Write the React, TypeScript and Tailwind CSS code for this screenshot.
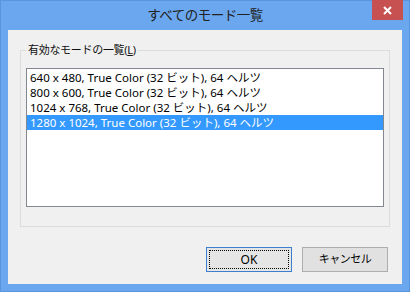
import React from 'react';

const modes = [
  '640 x 480, True Color (32 ビット), 64 ヘルツ',
  '800 x 600, True Color (32 ビット), 64 ヘルツ',
  '1024 x 768, True Color (32 ビット), 64 ヘルツ',
  '1280 x 1024, True Color (32 ビット), 64 ヘルツ',
];

const uiFont = { fontFamily: '"Noto Sans", "Noto Sans CJK JP", sans-serif' };

export default function App() {
  return (
    <div className="w-[410px] h-[292px] bg-[#6aa7ef] border border-[#5a95dc] flex flex-col text-[#000]" style={uiFont}>
      {/* title bar */}
      <div className="relative h-[29px] flex items-center justify-center shrink-0">
        <span className="text-[13.5px] text-[#222] tracking-[-0.5px]">すべてのモード一覧</span>
        <button className="absolute right-[6px] -top-px w-[31px] h-[20px] bg-[#c75050] flex items-center justify-center">
          <svg width="9" height="9" viewBox="0 0 9 9">
            <path d="M1 1L8 8M8 1L1 8" stroke="#fff" strokeWidth="2" />
          </svg>
        </button>
      </div>

      {/* client area */}
      <div className="flex-1 mx-[7px] mb-[7px] bg-[#f0f0f0] flex flex-col pt-[13px] px-[12px]">
        <fieldset className="border border-[#dcdcdc] px-[5px] pb-[19px] pt-[11px] w-[370px]">
          <legend className="px-[2px] text-[11px] leading-[14px] text-[#111] tracking-[-0.3px]">
            有効なモードの一覧(<span className="underline">L</span>)
          </legend>
          <div className="h-[139px] border border-[#828790] bg-white pt-px text-[11.5px] leading-[15px]">
            {modes.map((m, i) => (
              <div
                key={m}
                className={
                  i === 3
                    ? 'h-[15px] pl-[3px] bg-[#3399ff] text-white whitespace-nowrap'
                    : 'h-[15px] pl-[3px] text-[#000] whitespace-nowrap'
                }
              >
                {m}
              </div>
            ))}
          </div>
        </fieldset>

        <div className="flex justify-end gap-[10px] mt-[20px] pr-[2px]">
          <button className="w-[86px] h-[25px] border border-[#3c7fd1] bg-[#e5e5e5] p-[2px]">
            <div className="w-full h-full border border-dotted border-[#000] flex items-center justify-center text-[12px]">
              OK
            </div>
          </button>
          <button className="w-[86px] h-[25px] border border-[#adadad] bg-[#e1e1e1] flex items-center justify-center text-[11px] tracking-[-0.5px]">
            キャンセル
          </button>
        </div>
      </div>
    </div>
  );
}
